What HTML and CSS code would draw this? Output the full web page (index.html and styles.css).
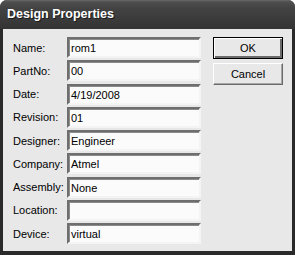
FILE: index.html
```html
<!DOCTYPE html>
<html>
<head>
  <meta charset="UTF-8">
  <title>Design Properties</title>
  <link rel="stylesheet" href="styles.css">
</head>
<body>
  <div class="window">
    <div class="titlebar">Design Properties</div>
    <div class="content">
      <div class="form">
        <label>Name:</label><input type="text" value="rom1">
        <label>PartNo:</label><input type="text" value="00">
        <label>Date:</label><input type="text" value="4/19/2008">
        <label>Revision:</label><input type="text" value="01">
        <label>Designer:</label><input type="text" value="Engineer">
        <label>Company:</label><input type="text" value="Atmel">
        <label>Assembly:</label><input type="text" value="None">
        <label>Location:</label><input type="text" value="">
        <label>Device:</label><input type="text" value="virtual">
      </div>
      <div class="buttons">
        <button class="default">OK</button>
        <button>Cancel</button>
      </div>
    </div>
  </div>
</body>
</html>
```

FILE: styles.css
```css
* {padding: 0; margin: 0; box-sizing: border-box;}

html, body {
  width: 295px;
  height: 255px;
  background: #fff;
  overflow: hidden;
}
.window {
  width: 295px;
  height: 255px;
  display: flex;
  flex-direction: column;
  background: #2a2a2a;
  border-radius: 7px 7px 0 0;
  font-family: "Liberation Sans", Arial, sans-serif;
}
.titlebar {
  height: 29px;
  padding: 7px 0 0 7px;
  border-radius: 7px 7px 0 0;
  background: linear-gradient(#6a6a6a 0, #4e4e4e 2px, #434343 8px, #3a3a3a 20px, #343434 29px);
  color: #fff;
  font-size: 12.5px;
  font-weight: bold;
  text-shadow: 1px 1px 0 #1a1a1a;
}
.content {
  flex: 1;
  margin: 0 3px 4px 3px;
  padding: 8px 0 0 10px;
  background: #e8e8e8;
  display: flex;
  align-items: flex-start;
}
.form {
  display: grid;
  grid-template-columns: 54px 134px;
  grid-auto-rows: 21px;
  row-gap: 2.25px;
  align-items: center;
}
.form label {
  font-size: 11px;
  color: #000;
}
.form input {
  height: 21px;
  width: 134px;
  padding: 1px 0 0 2px;
  border: 2px solid;
  border-color: #6e6e6e #f4f4f4 #f4f4f4 #6e6e6e;
  box-shadow: inset 1px 1px 0 #8a8a8a;
  background: #fbfbfb;
  font-family: "Liberation Sans", Arial, sans-serif;
  font-size: 11px;
  color: #000;
  outline: none;
}
.buttons {
  margin-left: 12px;
  display: flex;
  flex-direction: column;
  gap: 4px;
}
.buttons button {
  width: 70px;
  height: 22px;
  border: 1px solid;
  border-color: #fff #6a6a6a #6a6a6a #fff;
  box-shadow: inset -1px -1px 0 #a8a8a8;
  background: #e8e8e8;
  font-family: "Liberation Sans", Arial, sans-serif;
  font-size: 11px;
  color: #000;
}
.buttons button.default {
  border: 1px solid #000;
  box-shadow: inset 1px 1px 0 #fff, inset -2px -2px 0 #6a6a6a;
}
```
